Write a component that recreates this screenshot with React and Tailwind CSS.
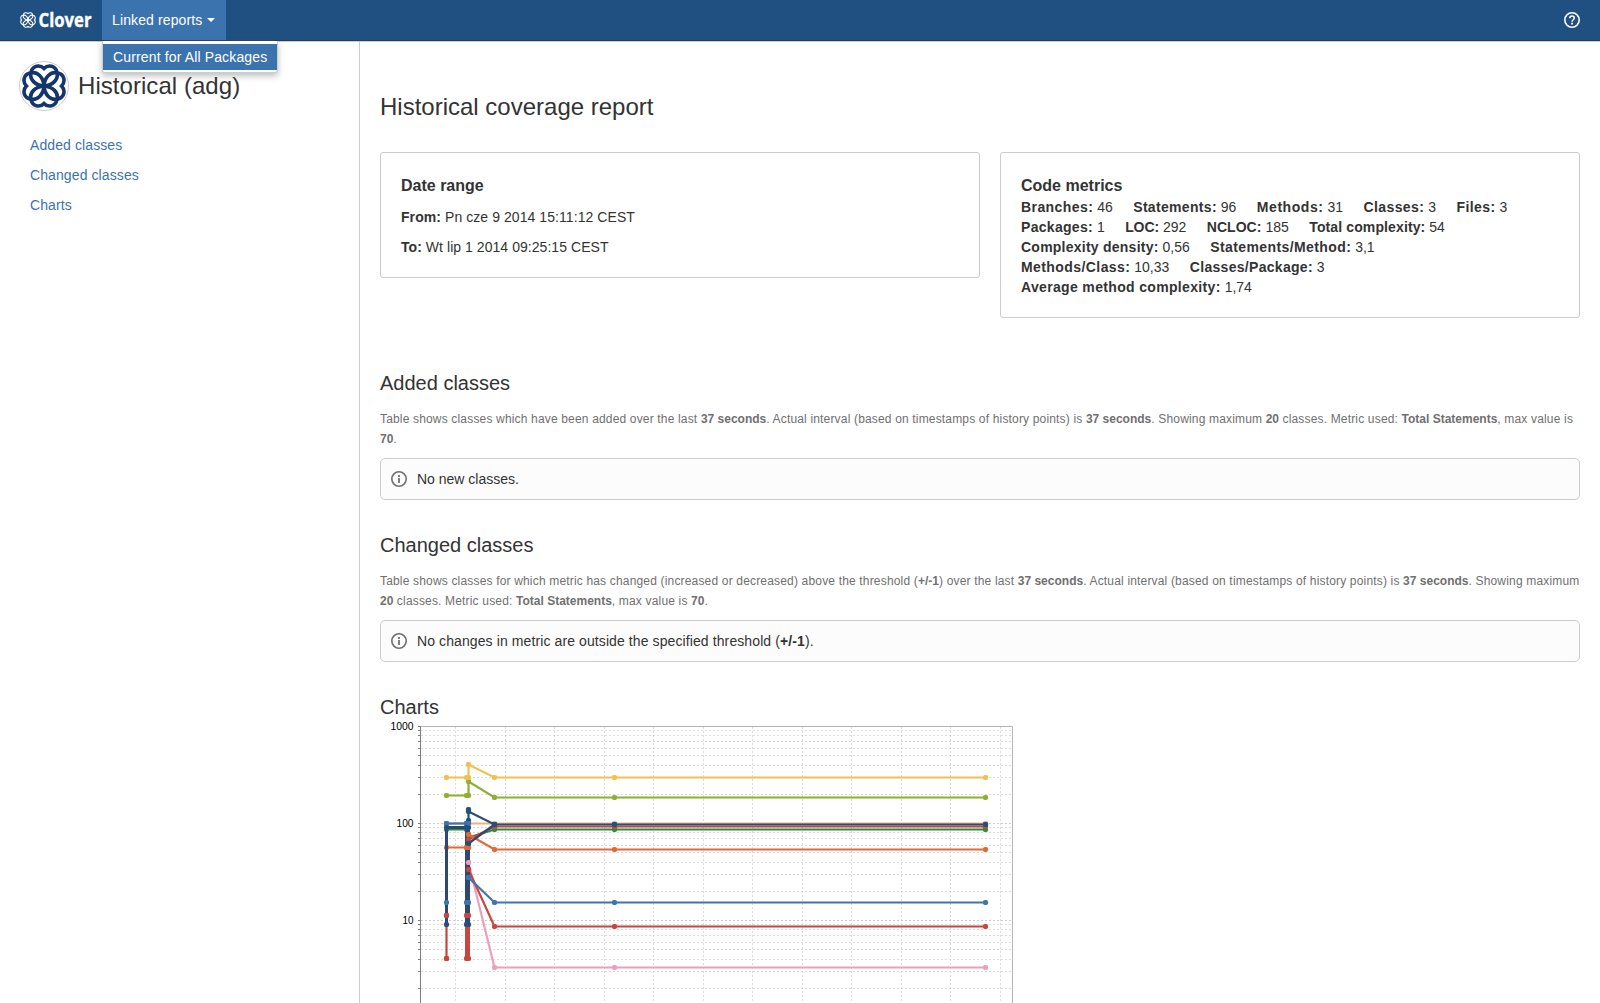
import React from "react";

const HEART =
  "M0 0C-8.4 -0.6 -15.2 -6.4 -12.9 -14.1C-11.4 -20.3 -4.3 -21.8 0 -17.6C4.3 -21.8 11.4 -20.3 12.9 -14.1C15.2 -6.4 8.4 -0.6 0 0Z";

function CloverMark({ size, color, stroke }) {
  return (
    <svg width={size} height={size} viewBox="-22 -22 44 44" fill="none" stroke={color} strokeWidth={stroke} className="block shrink-0">
      {[0, 90, 180, 270].map((a) => (
        <path key={a} d={HEART} transform={`rotate(${a})`} />
      ))}
    </svg>
  );
}

function Header() {
  return (
    <header className="flex h-[41px] shrink-0 border-b border-[#2e3d54] bg-[#205081] text-white shadow-[0_1px_0_#c8cdd4]">
      <div className="flex w-[102px] items-center pl-5">
        <CloverMark size={16} color="#ffffff" stroke={3} />
        <svg width="64" height="40" className="ml-[2px] shrink-0 overflow-visible">
          <text x="0.5" y="27" textLength="53" lengthAdjust="spacingAndGlyphs" fill="#fff" stroke="#fff" strokeWidth="0.4" fontSize="20" fontWeight="700" fontFamily="Open Sans, sans-serif">
            Clover
          </text>
        </svg>
      </div>
      <div className="relative h-10 w-[124px] shrink-0 bg-[#3b73af]">
        <div className="flex h-10 items-center pl-[10px] text-[14px] leading-5">
          <span className="tracking-[0.12px]">Linked reports</span>
          <span className="ml-[5px] border-x-4 border-t-4 border-x-transparent border-t-white" />
        </div>
        <div className="absolute left-0 top-[41px] z-10 w-[176px] rounded-b-[3px] border border-t-0 border-[#cccccc] bg-white pb-[2px] pt-[3px] shadow-[0_3px_6px_rgba(111,111,111,0.45)]">
          <div className="h-[26px] whitespace-nowrap bg-[#3b73af] pl-[10px] text-[14px] leading-[26px] tracking-[0.14px]">Current for All Packages</div>
        </div>
      </div>
      <div className="ml-auto mr-5 flex h-10 items-center">
        <svg width="16" height="16" viewBox="0 0 16 16" fill="none" stroke="#fff">
          <circle cx="8" cy="8" r="7.2" strokeWidth="1.6" />
          <path d="M5.7 6.3C5.7 4.9 6.6 4 8 4s2.3.9 2.3 2.1C10.3 7.7 8 7.8 8 9.8" strokeWidth="1.5" />
          <path d="M8 10.8v1.8" strokeWidth="1.8" />
        </svg>
      </div>
    </header>
  );
}

function Sidebar() {
  return (
    <aside className="w-[360px] shrink-0 border-r border-[#cccccc] pl-[19px] pt-5">
      <div className="flex items-center">
        <div className="flex h-[50px] w-[50px] items-center justify-center rounded-full border border-[#cccccc]">
          <CloverMark size={44} color="#14366b" stroke={3.6} />
        </div>
        <h1 className="ml-[9px] text-[24px] leading-7 tracking-[0.05px]">Historical (adg)</h1>
      </div>
      <nav className="ml-[11px] mt-6 flex flex-col gap-[10px] text-[14px] leading-5 tracking-[0.1px] text-[#3b73af]">
        <a>Added classes</a>
        <a>Changed classes</a>
        <a>Charts</a>
      </nav>
    </aside>
  );
}

const METRICS = [
  [
    ["Branches", "46", "tracking-[0.42px]"],
    ["Statements", "96", "tracking-[0.32px]"],
    ["Methods", "31", "tracking-[0.55px]"],
    ["Classes", "3", "tracking-[0.4px]"],
    ["Files", "3", "tracking-[0.45px]"],
  ],
  [
    ["Packages", "1", "tracking-[0.3px]"],
    ["LOC", "292", "tracking-[-0.1px]"],
    ["NCLOC", "185", "tracking-[0.05px]"],
    ["Total complexity", "54", "tracking-[0.12px]"],
  ],
  [
    ["Complexity density", "0,56", "tracking-[0.24px]"],
    ["Statements/Method", "3,1", "tracking-[0.4px]"],
  ],
  [
    ["Methods/Class", "10,33", "tracking-[0.42px]"],
    ["Classes/Package", "3", "tracking-[0.3px]"],
  ],
  [["Average method complexity", "1,74", "tracking-[0.34px]"]],
];

function Info({ children }) {
  return (
    <div className="mt-[9px] flex h-[42px] items-center rounded-[5px] border border-[#cccccc] bg-[#fcfcfc] pl-[10px] text-[14px] leading-5">
      <svg width="16" height="16" viewBox="0 0 16 16" fill="none" stroke="#707070">
        <circle cx="8" cy="8" r="7.2" strokeWidth="1.6" />
        <path d="M8 7v5M8 4v2" strokeWidth="1.8" />
      </svg>
      <span className="ml-[10px]">{children}</span>
    </div>
  );
}

function B({ children }) {
  return <b className="tracking-normal">{children}</b>;
}

const GRID_X = [455.5, 505.5, 554.5, 604.5, 653.5, 703.5, 752.5, 802.5, 851.5, 901.5, 950.5, 1000.5];
const GRID_Y = [1000, 900, 800, 700, 600, 500, 400, 300, 200, 100, 90, 80, 70, 60, 50, 40, 30, 20, 10, 9, 8, 7, 6, 5, 4, 3, 2].map((v) => ({
  v,
  y: Math.floor(726.5 + 97 * (3 - Math.log10(v))) + 0.5,
}));

const X0 = 446.5, X1 = 466.5, X2 = 467.5, X3 = 468.5, X4 = 494.5, X5 = 614.5, X6 = 985.5;
const SERIES = [
  { c: "#ec9fbd", p: [[X3, 862.5], [X4, 967.5], [X5, 967.5], [X6, 967.5]] },
  { c: "#f0b27c", p: [[X0, 823.5], [X3, 823.5], [X4, 823.5], [X5, 823.5], [X6, 823.5]] },
  { c: "#2f8a3c", p: [[X0, 829.5], [X1, 829.5], [X3, 837.5], [X4, 829.5], [X5, 829.5], [X6, 829.5]] },
  { c: "#c6473f", p: [[X3, 839.5], [X4, 826.5], [X5, 826.5], [X6, 826.5]] },
  { c: "#df6b36", p: [[X0, 847.5], [X1, 847.5], [X3, 847.5], [X3, 834.5], [X4, 849.5], [X5, 849.5], [X6, 849.5]] },
  { c: "#c6473f", p: [[X3, 869.5], [X4, 926.5], [X5, 926.5], [X6, 926.5]] },
  { c: "#c6473f", p: [[X0, 915.5], [X0, 958.5]] },
  { c: "#c6473f", w: 5, p: [[X2, 915.5], [X2, 958.5]] },
  { c: "#8eb031", p: [[X0, 795.5], [X1, 795.5], [X3, 795.5], [X3, 781.5], [X4, 797.5], [X5, 797.5], [X6, 797.5]] },
  { c: "#f0c14f", p: [[X0, 777.5], [X1, 777.5], [X3, 777.5], [X3, 764.5], [X4, 777.5], [X5, 777.5], [X6, 777.5]] },
  { c: "#2f4872", w: 3, p: [[X0, 826.5], [X0, 924.5]] },
  { c: "#2f4872", w: 5, p: [[X2, 823.5], [X2, 924.5]] },
  { c: "#3f74ad", p: [[X0, 823.5], [X1, 823.5]] },
  { c: "#2f4872", w: 3, p: [[X0, 827.5], [X1, 827.5]] },
  { c: "#2f4872", p: [[X3, 843.5], [X4, 824.5]] },
  { c: "#24507f", p: [[X3, 820.5], [X3, 809.5]] },
  { c: "#24507f", p: [[X3, 811.5], [X4, 824.5], [X5, 824.5], [X6, 824.5]] },
  { c: "#3f74ad", p: [[X3, 877.5], [X4, 902.5], [X5, 902.5], [X6, 902.5]] },
];
const DOTS = [
  ["#c6473f", X0, 915.5], ["#c6473f", X0, 958.5], ["#c6473f", X1, 915.5], ["#c6473f", X3, 915.5], ["#c6473f", X1, 958.5], ["#c6473f", X3, 958.5],
  ["#24507f", X0, 924.5], ["#24507f", X1, 924.5], ["#24507f", X3, 924.5], ["#3f74ad", X0, 902.5], ["#3f74ad", X1, 902.5], ["#3f74ad", X3, 902.5],
  ["#24507f", X3, 827.5], ["#3f74ad", X0, 823.5], ["#3f74ad", X1, 823.5], ["#3f74ad", X3, 823.5],
  ["#df6b36", X1, 847.5], ["#df6b36", X3, 847.5],
  ["#c6473f", X3, 839.5], ["#df6b36", X3, 834.5], ["#24507f", X3, 843.5], ["#24507f", X0, 827.5], ["#24507f", X1, 827.5],
  ["#ec9fbd", X3, 862.5], ["#c6473f", X3, 869.5], ["#3f74ad", X3, 877.5],
  ["#24507f", X4, 824.5], ["#24507f", X5, 824.5], ["#24507f", X6, 824.5],
];

function Dot({ c, x, y }) {
  return <rect x={x - 2.6} y={y - 2.6} width="5.2" height="5.2" rx="2" fill={c} />;
}

function Chart() {
  return (
    <svg width="640" height="284" viewBox="380 719 640 284" className="block">
      <g stroke="#dcdcdc" strokeWidth="1" strokeDasharray="2 2">
        {GRID_X.map((x) => (
          <path key={x} d={`M${x} 727V1003`} />
        ))}
        {GRID_Y.map(({ v, y }) => (
          <path key={v} d={`M421 ${y}H1012`} stroke={v === 100 || v === 10 ? "#cccccc" : "#dcdcdc"} />
        ))}
      </g>
      <path d="M418 726.5H1012.5V1003" fill="none" stroke="#b4b4b4" />
      <path d="M420.5 726V1003" stroke="#808080" />
      {GRID_Y.map(({ v, y }) => (
        <path key={v} d={`M418 ${y}H420`} stroke="#808080" />
      ))}
      <g fill="#000" fontSize="10" fontFamily="Liberation Sans, Arial, sans-serif" textAnchor="end">
        <text x="413.5" y="730" textLength="23" lengthAdjust="spacingAndGlyphs">1000</text>
        <text x="413.5" y="827" textLength="17" lengthAdjust="spacingAndGlyphs">100</text>
        <text x="413.5" y="924" textLength="11" lengthAdjust="spacingAndGlyphs">10</text>
      </g>
      {SERIES.map((s, i) => (
        <g key={i}>
          <polyline points={s.p.map((q) => q.join(",")).join(" ")} fill="none" stroke={s.c} strokeWidth={s.w || 2.2} />
          {!s.w && s.p.map(([x, y], j) => <Dot key={j} c={s.c} x={x} y={y} />)}
        </g>
      ))}
      {DOTS.map(([c, x, y], i) => (
        <Dot key={i} c={c} x={x} y={y} />
      ))}
    </svg>
  );
}

export default function App() {
  return (
    <div className="flex h-[1003px] w-[1600px] flex-col overflow-hidden bg-white font-['Liberation_Sans',Arial,sans-serif] text-[#333333]">
      <Header />
      <div className="flex min-h-0 flex-1">
        <Sidebar />
        <main className="flex-1 pl-5 pr-5 pt-[52px]">
          <h2 className="text-[24px] leading-7">Historical coverage report</h2>
          <div className="mt-[31px] flex items-start gap-5">
            <section className="h-[126px] w-[600px] rounded-[3px] border border-[#cccccc] px-5 pt-[23px]">
              <h3 className="text-[16px] font-bold leading-5">Date range</h3>
              <p className="mt-[11px] text-[14px] leading-5 tracking-[0.07px]"><b>From:</b> Pn cze 9 2014 15:11:12 CEST</p>
              <p className="mt-[10px] text-[14px] leading-5 tracking-[0.05px]"><b>To:</b> Wt lip 1 2014 09:25:15 CEST</p>
            </section>
            <section className="h-[166px] w-[580px] rounded-[3px] border border-[#cccccc] px-5 pt-[23px]">
              <h3 className="mb-px text-[16px] font-bold leading-5">Code metrics</h3>
              {METRICS.map((row, i) => (
                <div key={i} className="flex gap-[20.5px] whitespace-nowrap text-[14px] leading-5">
                  {row.map(([k, v, tracking]) => (
                    <span key={k}><b className={tracking}>{k}:</b> {v}</span>
                  ))}
                </div>
              ))}
            </section>
          </div>

          <h2 className="mt-[53px] text-[20px] leading-6">Added classes</h2>
          <div className="mt-[14px] whitespace-nowrap text-[12px] leading-5 tracking-[0.167px] text-[#707070]">
            <p>Table shows classes which have been added over the last <B>37 seconds</B>. Actual interval (based on timestamps of history points) is <B>37 seconds</B>. Showing maximum <B>20</B> classes. Metric used: <B>Total Statements</B>, max value is</p>
            <p><B>70</B>.</p>
          </div>
          <Info>No new classes.</Info>

          <h2 className="mt-[33px] text-[20px] leading-6">Changed classes</h2>
          <div className="mt-[14px] whitespace-nowrap text-[12px] leading-5 tracking-[0.172px] text-[#707070]">
            <p>Table shows classes for which metric has changed (increased or decreased) above the threshold (<B>+/-1</B>) over the last <B>37 seconds</B>. Actual interval (based on timestamps of history points) is <B>37 seconds</B>. Showing maximum</p>
            <p><B>20</B> classes. Metric used: <B>Total Statements</B>, max value is <B>70</B>.</p>
          </div>
          <Info><span className="tracking-[0.1px]">No changes in metric are outside the specified threshold (<b>+/-1</b>).</span></Info>

          <h2 className="mt-[33px] text-[20px] leading-6">Charts</h2>
          <Chart />
        </main>
      </div>
    </div>
  );
}
